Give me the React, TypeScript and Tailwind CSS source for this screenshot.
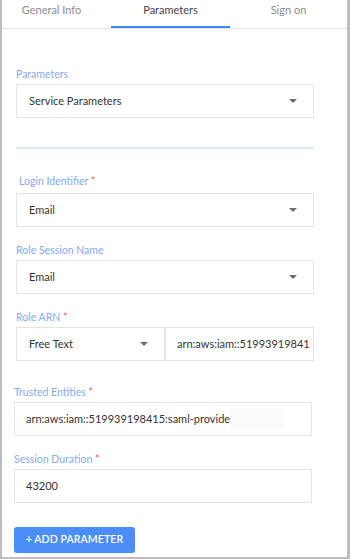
const font = { fontFamily: 'Lato, "Noto Sans", sans-serif' };

function Caret() {
  return (
    <svg width="8" height="4" viewBox="0 0 8 4" className="shrink-0">
      <path d="M0 0h8L4 4z" fill="#6b6b6b" />
    </svg>
  );
}

function Label({ text, required, className = '' }: { text: string; required?: boolean; className?: string }) {
  return (
    <div className={`text-[10.5px] leading-[14px] text-[#86aaf7] ${className}`}>
      {text}
      {required && <span className="text-[#f25c5c]"> *</span>}
    </div>
  );
}

function Select({ value, className = '' }: { value: string; className?: string }) {
  return (
    <div
      className={`h-[34px] border border-[#e4e4e4] flex items-center justify-between pl-[12px] pr-[16px] text-[11px] text-[#333] ${className}`}
    >
      <span>{value}</span>
      <Caret />
    </div>
  );
}

export default function App() {
  return (
    <div
      style={font}
      className="w-[350px] h-[559px] bg-white border-l-2 border-r-[3px] border-b-2 border-[#bdbdbd] flex flex-col overflow-hidden"
    >
      {/* Tabs */}
      <div className="flex h-[29px] border-b border-[#e6e6e6] text-[11px] leading-[14px]">
        <div className="w-[109px] pt-[3px] pr-[10px] text-center text-[#8c8c8c]">General Info</div>
        <div className="w-[119px] pt-[3px] text-center text-[#444] border-b-2 border-[#3d86f2]">Parameters</div>
        <div className="flex-1 pt-[3px] text-center text-[#8c8c8c]">Sign on</div>
      </div>

      <div className="flex flex-col pl-[14px] pr-[33px]">
        <Label text="Parameters" className="mt-[38px]" />
        <Select value="Service Parameters" className="mt-[3px]" />

        <div className="h-[2px] bg-[#dce9fb] mt-[29px]" />

        <Label text="Login Identifier" required className="mt-[25px] pl-[3px]" />
        <Select value="Email" className="mt-[5px]" />

        <Label text="Role Session Name" className="mt-[16px]" />
        <Select value="Email" className="mt-[3px]" />

        <Label text="Role ARN" required className="mt-[16px]" />
        <div className="flex mt-[3px]">
          <Select value="Free Text" className="w-[149px] pr-[14px]" />
          <div className="flex-1 min-w-0 h-[34px] border border-[#e4e4e4] flex items-center pl-[11px] pr-[8px] text-[11px] text-[#333] overflow-hidden whitespace-nowrap">
            arn:aws:iam::51993919841
          </div>
        </div>

        <Label text="Trusted Entities" required className="mt-[24px] -ml-[2px]" />
        <div className="h-[34px] border border-[#e4e4e4] flex items-center pl-[11px] text-[11px] text-[#333] mt-[3px] -ml-[2px] mr-[2px] whitespace-nowrap">
          arn:aws:iam::519939198415:saml-provide
          <span className="w-[54px] h-[22px] bg-[#fbfbfb]" />
        </div>

        <Label text="Session Duration" required className="mt-[16px] -ml-[2px]" />
        <div className="h-[34px] border border-[#e4e4e4] flex items-center pl-[11px] text-[11px] text-[#333] mt-[3px] -ml-[2px] mr-[2px]">
          43200
        </div>

        <button className="mt-[24px] -ml-[2px] w-[121px] h-[26px] rounded-[3px] bg-[#4b8ef8] text-white text-[10.5px] font-semibold tracking-[0.1px] flex items-center justify-center">
          + ADD PARAMETER
        </button>
      </div>
    </div>
  );
}
